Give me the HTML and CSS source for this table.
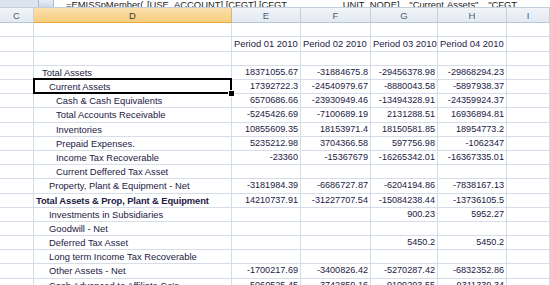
FILE: index.html
```html
<!DOCTYPE html>
<html>
<head>
<meta charset="utf-8">
<link rel="stylesheet" href="styles.css">
</head>
<body>
<div class="formula-bar">
  <div class="name-box"></div>
  <div class="fx-button"></div>
  <div class="formula"><span class="formula-text">=EMISSpMember( [USE_ACCOUNT].[CFGT],[CFGT.&nbsp;&nbsp;&nbsp;&nbsp;&nbsp;&nbsp;&nbsp;&nbsp;&nbsp;&nbsp;&nbsp;&nbsp;&nbsp;&nbsp;&nbsp;UNIT_NODE] , "Current Assets" , "CFGT</span></div>
</div>

<div class="sheet">
  <!-- column headers -->
  <div class="col-head">C</div>
  <div class="col-head selected">D</div>
  <div class="col-head">E</div>
  <div class="col-head">F</div>
  <div class="col-head">G</div>
  <div class="col-head">H</div>
  <div class="col-head">I</div>

  <!-- row 1 -->
  <div class="cell"></div><div class="cell"></div><div class="cell"></div><div class="cell"></div><div class="cell"></div><div class="cell"></div><div class="cell"></div>

  <!-- row 2: periods -->
  <div class="cell"></div><div class="cell"></div>
  <div class="cell label">Period 01 2010</div>
  <div class="cell label">Period 02 2010</div>
  <div class="cell label">Period 03 2010</div>
  <div class="cell label">Period 04 2010</div>
  <div class="cell"></div>

  <!-- row 3 -->
  <div class="cell"></div><div class="cell"></div><div class="cell"></div><div class="cell"></div><div class="cell"></div><div class="cell"></div><div class="cell"></div>

  <div class="cell"></div>
  <div class="cell label lvl1">Total Assets</div>
  <div class="cell num">18371055.67</div><div class="cell num">-31884675.8</div><div class="cell num">-29456378.98</div><div class="cell num">-29868294.23</div>
  <div class="cell"></div>

  <div class="cell"></div>
  <div class="cell label lvl2 active">Current Assets</div>
  <div class="cell num">17392722.3</div><div class="cell num">-24540979.67</div><div class="cell num">-8880043.58</div><div class="cell num">-5897938.37</div>
  <div class="cell"></div>

  <div class="cell"></div>
  <div class="cell label lvl3">Cash &amp; Cash Equivalents</div>
  <div class="cell num">6570686.66</div><div class="cell num">-23930949.46</div><div class="cell num">-13494328.91</div><div class="cell num">-24359924.37</div>
  <div class="cell"></div>

  <div class="cell"></div>
  <div class="cell label lvl3">Total Accounts Receivable</div>
  <div class="cell num">-5245426.69</div><div class="cell num">-7100689.19</div><div class="cell num">2131288.51</div><div class="cell num">16936894.81</div>
  <div class="cell"></div>

  <div class="cell"></div>
  <div class="cell label lvl3">Inventories</div>
  <div class="cell num">10855609.35</div><div class="cell num">18153971.4</div><div class="cell num">18150581.85</div><div class="cell num">18954773.2</div>
  <div class="cell"></div>

  <div class="cell"></div>
  <div class="cell label lvl3">Prepaid Expenses.</div>
  <div class="cell num">5235212.98</div><div class="cell num">3704366.58</div><div class="cell num">597756.98</div><div class="cell num">-1062347</div>
  <div class="cell"></div>

  <div class="cell"></div>
  <div class="cell label lvl3">Income Tax Recoverable</div>
  <div class="cell num">-23360</div><div class="cell num">-15367679</div><div class="cell num">-16265342.01</div><div class="cell num">-16367335.01</div>
  <div class="cell"></div>

  <div class="cell"></div>
  <div class="cell label lvl3">Current Deffered Tax Asset</div>
  <div class="cell"></div><div class="cell"></div><div class="cell"></div><div class="cell"></div>
  <div class="cell"></div>

  <div class="cell"></div>
  <div class="cell label lvl2">Property, Plant &amp; Equipment - Net</div>
  <div class="cell num">-3181984.39</div><div class="cell num">-6686727.87</div><div class="cell num">-6204194.86</div><div class="cell num">-7838167.13</div>
  <div class="cell"></div>

  <div class="cell"></div>
  <div class="cell label lvl0 bold">Total Assets &amp; Prop, Plant &amp; Equipment</div>
  <div class="cell num">14210737.91</div><div class="cell num">-31227707.54</div><div class="cell num">-15084238.44</div><div class="cell num">-13736105.5</div>
  <div class="cell"></div>

  <div class="cell"></div>
  <div class="cell label lvl2">Investments in Subsidiaries</div>
  <div class="cell"></div><div class="cell"></div><div class="cell num">900.23</div><div class="cell num">5952.27</div>
  <div class="cell"></div>

  <div class="cell"></div>
  <div class="cell label lvl2">Goodwill - Net</div>
  <div class="cell"></div><div class="cell"></div><div class="cell"></div><div class="cell"></div>
  <div class="cell"></div>

  <div class="cell"></div>
  <div class="cell label lvl2">Deferred Tax Asset</div>
  <div class="cell"></div><div class="cell"></div><div class="cell num">5450.2</div><div class="cell num">5450.2</div>
  <div class="cell"></div>

  <div class="cell"></div>
  <div class="cell label lvl2">Long term Income Tax Recoverable</div>
  <div class="cell"></div><div class="cell"></div><div class="cell"></div><div class="cell"></div>
  <div class="cell"></div>

  <div class="cell"></div>
  <div class="cell label lvl2">Other Assets - Net</div>
  <div class="cell num">-1700217.69</div><div class="cell num">-3400826.42</div><div class="cell num">-5270287.42</div><div class="cell num">-6832352.86</div>
  <div class="cell"></div>

  <div class="cell"></div>
  <div class="cell label lvl2">Cash Advanced to Affiliate Co's</div>
  <div class="cell num">5060525.45</div><div class="cell num">-3742859.16</div><div class="cell num">-9109293.55</div><div class="cell num">-9311339.34</div>
  <div class="cell"></div>
</div>
</body>
</html>
```

FILE: styles.css
```css
html, body {
  margin: 0;
  padding: 0;
  background: #ffffff;
  overflow: hidden;
}

body {
  width: 550px;
  height: 285px;
  font-family: "Liberation Sans", Arial, sans-serif;
  color: #1c1944;
}

/* formula bar strip along the top edge */
.formula-bar {
  display: flex;
  height: 7px;
  background: #dfe7f1;
  border-bottom: 1px solid #c3cfdd;
  overflow: hidden;
}

.name-box {
  width: 38px;
  background: #dce5ef;
}

.fx-button {
  width: 14px;
  background: linear-gradient(#e9eef5, #cdd8e6);
  border-left: 1px solid #aebdd0;
  border-right: 1px solid #aebdd0;
}

.formula {
  flex: 1;
  background: #ffffff;
  position: relative;
  overflow: hidden;
}

.formula-text {
  position: absolute;
  left: 12px;
  bottom: -3px;
  font-size: 9.4px;
  line-height: 10px;
  white-space: nowrap;
  color: #1b1b1b;
  word-spacing: 1px;
}

/* worksheet grid */
.sheet {
  display: grid;
  grid-template-columns: 34px 198px 69px 70px 67px 69px 1fr;
  grid-template-rows: 15.3px;
  grid-auto-rows: 14.2px;
}

.col-head {
  display: flex;
  align-items: center;
  justify-content: center;
  font-size: 9.5px;
  color: #4b5c75;
  background: linear-gradient(#f2f5f9, #e2e9f2);
  border-right: 1px solid #c5cfdc;
  border-bottom: 1px solid #b9c6d6;
  box-sizing: border-box;
}

.col-head.selected {
  background: linear-gradient(#fbe1ae, #f7cd7c);
  border-bottom: 1px solid #eda544;
  border-right-color: #e2b56a;
  color: #3b3b3b;
}

.cell {
  border-right: 1px solid #d5dde9;
  border-bottom: 1px solid #d5dde9;
  box-sizing: border-box;
  white-space: nowrap;
  overflow: visible;
  font-size: 9.4px;
  line-height: 13px;
  padding: 0 2px;
  min-width: 0;
}

.label {
  text-align: left;
}

.num {
  text-align: right;
  font-size: 9.1px;
  padding-right: 2px;
}

.lvl0 { padding-left: 2px; }
.lvl1 { padding-left: 8px; }
.lvl2 { padding-left: 15px; }
.lvl3 { padding-left: 22px; }

.bold {
  font-weight: bold;
  letter-spacing: -0.1px;
}

/* active cell frame with its fill handle */
.active {
  position: relative;
}

.active::before {
  content: "";
  position: absolute;
  left: -1px;
  top: -2px;
  right: -1px;
  bottom: -1px;
  border: 2px solid #000000;
  z-index: 2;
}

.active::after {
  content: "";
  position: absolute;
  right: -4px;
  bottom: -4px;
  width: 5px;
  height: 5px;
  background: #000000;
  border: 1px solid #ffffff;
  z-index: 3;
}
```
